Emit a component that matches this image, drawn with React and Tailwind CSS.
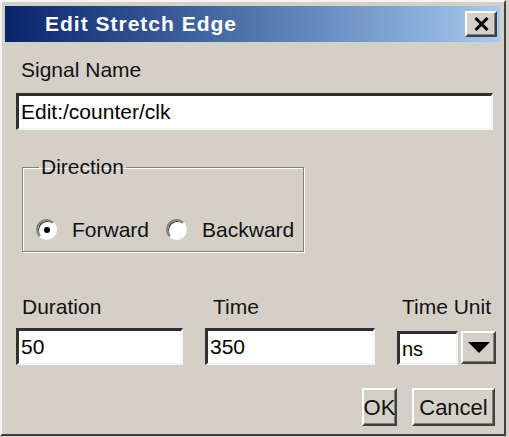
import React from "react";

const font = { fontFamily: '"Liberation Sans", Arial, sans-serif' };

function Sunken({ className = "", children }) {
  return (
    <div
      className={
        "bg-white border-t-[3px] border-l-[3px] border-t-[#303030] border-l-[#303030] border-r-[2px] border-b-[2px] border-r-[#f4f4f4] border-b-[#f4f4f4] flex items-center pl-[2px] text-black " +
        className
      }
    >
      {children}
    </div>
  );
}

function Raised({ className = "", children }) {
  return (
    <div
      className={
        "bg-[#d4d0c8] border-t-2 border-l-2 border-t-[#ffffff] border-l-[#ffffff] border-r-2 border-b-2 border-r-[#404040] border-b-[#404040] shadow-[inset_-1px_-1px_0_#808080] flex items-center justify-center " +
        className
      }
    >
      {children}
    </div>
  );
}

function Radio({ checked }) {
  return (
    <div className="w-[21px] h-[21px] shrink-0 rounded-full bg-white border-2 border-t-[#808080] border-l-[#808080] border-r-[#ffffff] border-b-[#ffffff] flex items-center justify-center shadow-[inset_1px_1px_0_#404040]">
      {checked && <div className="w-[6px] h-[6px] rounded-full bg-black" />}
    </div>
  );
}

export default function App() {
  return (
    <div className="w-[509px] h-[437px] bg-[#d4d0c8] text-[#111] text-[21px]" style={font}>
      <div className="w-[506px] h-[436px] flex flex-col border-t-2 border-l-2 border-t-[#f4f4f4] border-l-[#f4f4f4] border-r-2 border-b-2 border-r-[#404040] border-b-[#404040] pt-[4px] pl-[3px] pr-[4px]">
        {/* Title bar */}
        <div className="h-[36px] flex items-center bg-gradient-to-r from-[#0a246a] to-[#a6caf0] pl-[40px] pr-[3px]">
          <span className="text-white font-bold text-[21px] tracking-[1px] flex-1">Edit Stretch Edge</span>
          <Raised className="w-[32px] h-[26px]">
            <svg width="15" height="14" viewBox="0 0 15 14">
              <path d="M1.5 1 L13.5 13 M13.5 1 L1.5 13" stroke="#000" strokeWidth="3" />
            </svg>
          </Raised>
        </div>

        {/* Body */}
        <div className="flex flex-col pl-[11px] pr-[4px]">
          <div className="mt-[16px] h-[24px] leading-[24px] pl-[5px]">Signal Name</div>
          <Sunken className="mt-[11px] h-[37px] w-[477px]">Edit:/counter/clk</Sunken>

          <fieldset className="mt-[25px] ml-[6px] w-[282px] min-w-0 h-[97px] border border-[#808080] shadow-[1px_1px_0_#ffffff,inset_1px_1px_0_#ffffff] pl-[13px] pr-[2px]">
            <legend className="px-[2px] ml-[3px] h-[24px] leading-[24px]">Direction</legend>
            <div className="flex items-center mt-[35px]">
              <Radio checked />
              <span className="ml-[15px]">Forward</span>
              <div className="ml-[17px]">
                <Radio />
              </div>
              <span className="ml-[15px]">Backward</span>
            </div>
          </fieldset>

          <div className="mt-[43px] flex h-[24px] leading-[24px]">
            <span className="ml-[6px] w-[191px]">Duration</span>
            <span>Time</span>
            <span className="ml-auto mr-[5px]">Time Unit</span>
          </div>
          <div className="mt-[9px] flex items-start">
            <Sunken className="h-[37px] w-[167px]">50</Sunken>
            <Sunken className="ml-[22px] h-[37px] w-[170px]">350</Sunken>
            <Sunken className="ml-[22px] mt-[3px] h-[34px] w-[61px] text-[20px]">ns</Sunken>
            <Raised className="ml-[3px] mt-[3px] w-[35px] h-[33px]">
              <svg width="22" height="11" viewBox="0 0 22 11">
                <path d="M0 0 H22 L11 11 Z" fill="#000" />
              </svg>
            </Raised>
          </div>
          <div className="mt-[23px] flex justify-end pr-[1px]">
            <Raised className="w-[35px] h-[38px] text-[22px]">OK</Raised>
            <Raised className="ml-[15px] w-[83px] h-[38px] text-[22px]">Cancel</Raised>
          </div>
        </div>
      </div>
    </div>
  );
}
